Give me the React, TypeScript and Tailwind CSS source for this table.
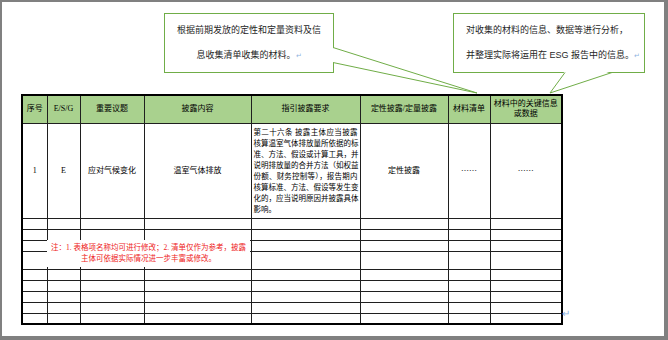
export default function App() {
  const emptyRows = [
    'h-[11px]',
    'h-[11px]',
    'h-[11px]',
    'h-[18px]',
    'h-[11px]',
    'h-[11px]',
    'h-[11px]',
    'h-[11px]',
    'h-[11px]',
  ]
  const guideLines = [
    '第二十六条 披露主体应当披露',
    '核算温室气体排放量所依据的标',
    '准、方法、假设或计算工具，并',
    '说明排放量的合并方法（如权益',
    '份额、财务控制等），报告期内',
    '核算标准、方法、假设等发生变',
    '化的，应当说明原因并披露具体',
  ]
  const cell = 'border border-[#1f1f1f] p-0'

  return (
    <div className="w-[668px] h-[340px] bg-[#808080] pl-[2px] pt-[2px] pr-[4px] pb-[4px]">
      <div className="relative h-full bg-white [font-family:'Liberation_Serif','Noto_Sans_CJK_SC',serif] text-black">
        {/* Callouts */}
        <div className="flex pt-[11px] [font-family:'Liberation_Sans','Noto_Sans_CJK_SC',sans-serif] text-[9px] leading-[25px] text-[#262626]">
          <div className="ml-[162px] w-[170px] h-[60px] border border-[#70ad47] pt-[4px] text-center">
            <p>根据前期发放的定性和定量资料及信</p>
            <p>
              息收集清单收集的材料。<span className="text-[#8fb3e0] text-[7px]">↵</span>
            </p>
          </div>
          <div className="ml-[119px] w-[192px] h-[60px] border border-[#70ad47] pt-[4px] pl-[12px]">
            <p>对收集的材料的信息、数据等进行分析，</p>
            <p>
              并整理实际将运用在 ESG 报告中的信息。<span className="text-[#8fb3e0] text-[7px]">↵</span>
            </p>
          </div>
        </div>

        {/* Callout tails */}
        <svg className="absolute inset-0 pointer-events-none" width="662" height="334">
          <polygon points="330,45.5 475,91 330,60.5" fill="#fff" />
          <polyline points="331,45.5 475,91 331,60.5" fill="none" stroke="#70ad47" strokeWidth="1" />
          <polygon points="563,69 548,91 610,69" fill="#fff" />
          <polyline points="563,70.5 548,91 610,70.5" fill="none" stroke="#70ad47" strokeWidth="1" />
        </svg>

        {/* Table */}
        <div className="relative ml-[19px] mt-[21px] w-[540px]">
          <table className="table-fixed w-[540px] border-collapse border-2 border-black text-[8px] leading-[10px]">
            <colgroup>
              <col className="w-[25px]" />
              <col className="w-[33px]" />
              <col className="w-[64px]" />
              <col className="w-[107px]" />
              <col className="w-[109px]" />
              <col className="w-[88px]" />
              <col className="w-[42px]" />
              <col className="w-[72px]" />
            </colgroup>
            <thead>
              <tr className="h-[28px] bg-[#a9d18e] text-center">
                <th className={`${cell} font-normal`}>序号</th>
                <th className={`${cell} font-normal`}>E/S/G</th>
                <th className={`${cell} font-normal`}>重要议题</th>
                <th className={`${cell} font-normal`}>披露内容</th>
                <th className={`${cell} font-normal`}>指引披露要求</th>
                <th className={`${cell} font-normal`}>定性披露/定量披露</th>
                <th className={`${cell} font-normal`}>材料清单</th>
                <th className={`${cell} font-normal`}>
                  材料中的关键信息
                  <br />
                  或数据
                </th>
              </tr>
            </thead>
            <tbody>
              <tr className="h-[95px] text-center">
                <td className={cell}>1</td>
                <td className={cell}>E</td>
                <td className={cell}>应对气候变化</td>
                <td className={cell}>温室气体排放</td>
                <td className={`${cell} px-[2px] text-left text-[7.5px] leading-[11px]`}>
                  {guideLines.map((line) => (
                    <div key={line} className="whitespace-nowrap text-justify [text-align-last:justify]">
                      {line}
                    </div>
                  ))}
                  <div>影响。</div>
                </td>
                <td className={cell}>定性披露</td>
                <td className={`${cell} text-[#333] [font-family:'Noto_Sans_CJK_SC',sans-serif]`}>……</td>
                <td className={`${cell} text-[#333] [font-family:'Noto_Sans_CJK_SC',sans-serif]`}>……</td>
              </tr>
              {emptyRows.map((h, i) => (
                <tr key={i} className={h}>
                  <td className={cell} />
                  <td className={cell} />
                  <td className={cell} />
                  <td className={cell} />
                  <td className={cell} />
                  <td className={cell} />
                  <td className={cell} />
                  <td className={cell} />
                </tr>
              ))}
            </tbody>
          </table>

          {/* Note box */}
          <div className="absolute left-[26px] top-[146px] w-[203px] h-[27px] bg-white pt-[2px] text-center text-[7.5px] leading-[11px] text-[#ee2222]">
            <p>注：1. 表格项名称均可进行修改；2. 清单仅作为参考，披露</p>
            <p>主体可依据实际情况进一步丰富或修改。</p>
          </div>

          <span className="absolute left-[541px] top-[215px] text-[10px] leading-[10px] text-[#8fb3e0]">↵</span>
        </div>
      </div>
    </div>
  )
}
